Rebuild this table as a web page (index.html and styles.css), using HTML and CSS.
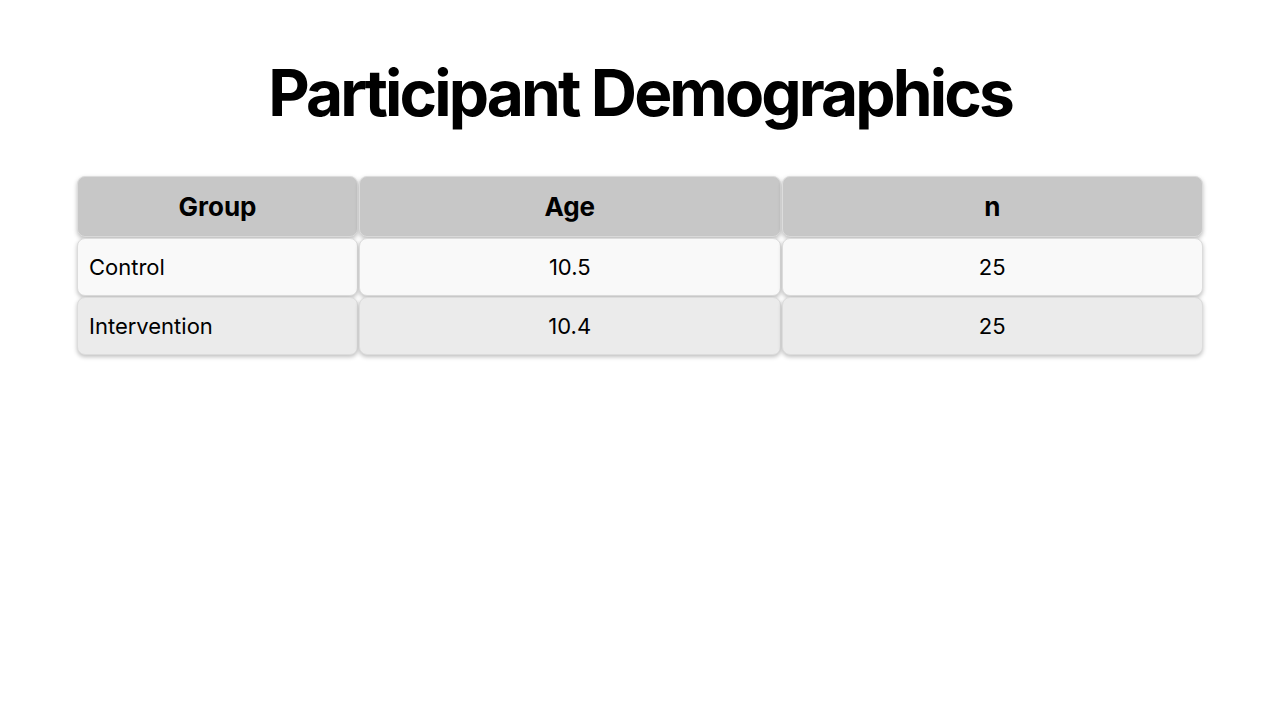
FILE: index.html
```html
<!DOCTYPE html>
<html>
<head>
<meta charset="utf-8">
<link rel="stylesheet" href="styles.css">
</head>
<body>
<main class="slide">
  <h1 class="title">Participant Demographics</h1>
  <div class="table">
    <div class="cell head">Group</div>
    <div class="cell head">Age</div>
    <div class="cell head">n</div>
    <div class="cell odd left">Control</div>
    <div class="cell odd">10.5</div>
    <div class="cell odd">25</div>
    <div class="cell even left">Intervention</div>
    <div class="cell even">10.4</div>
    <div class="cell even">25</div>
  </div>
</main>
</body>
</html>
```

FILE: styles.css
```css
html, body {
  margin: 0;
  padding: 0;
  background: #ffffff;
}
.slide {
  width: 1280px;
  height: 720px;
  box-sizing: border-box;
  padding: 53px 77px 0;
  font-family: Inter, "Noto Sans", sans-serif;
  color: #000;
}
.title {
  margin: 0;
  text-align: center;
  font-size: 64px;
  font-weight: 700;
  letter-spacing: -2.9px;
  line-height: 80px;
}
.table {
  margin-top: 43px;
  display: grid;
  grid-template-columns: 2fr 3fr 3fr;
  grid-template-rows: 61px 58px 58px;
  gap: 1px;
}
.cell {
  display: flex;
  align-items: center;
  justify-content: center;
  border-radius: 8px;
  border: 1px solid #dcdcdc;
  box-shadow: 0 2px 4px rgba(0,0,0,0.25);
  font-size: 22px;
  font-weight: 400;
}
.cell.left {
  justify-content: flex-start;
  padding-left: 11px;
}
.head {
  background: #c7c7c7;
  font-weight: 700;
  font-size: 26px;
}
.odd { background: #f9f9f9; }
.even { background: #ebebeb; }
```
